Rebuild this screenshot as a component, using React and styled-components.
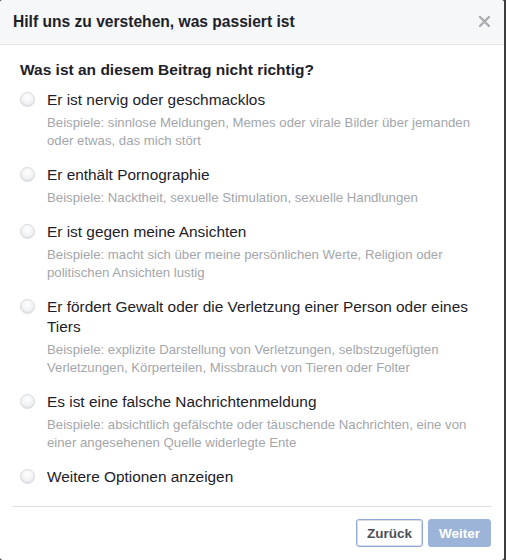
import React from 'react';
import styled, { createGlobalStyle } from 'styled-components';

const GlobalStyle = createGlobalStyle`
  html, body {
    margin: 0;
    padding: 0;
    background: #3d3d3d;
  }
  * {
    box-sizing: border-box;
  }
`;

const Dialog = styled.div`
  width: 504px;
  height: 560px;
  background: #fff;
  border-radius: 3px;
  overflow: hidden;
  font-family: "Liberation Sans", Arial, sans-serif;
  color: #1d2129;
  display: flex;
  flex-direction: column;
`;

const Header = styled.div`
  height: 45px;
  background: #f6f7f9;
  border-bottom: 1px solid #e5e5e5;
  display: flex;
  align-items: center;
  justify-content: space-between;
  padding: 0 12px 1px 13px;
`;

const HeaderTitle = styled.h1`
  margin: 0;
  font-size: 15.6px;
  font-weight: bold;
  line-height: 20px;
`;

const CloseButton = styled.button`
  width: 16px;
  height: 16px;
  padding: 0;
  border: 0;
  background: none;
  display: flex;
  align-items: center;
  justify-content: center;
  cursor: pointer;
`;

const Body = styled.div`
  padding: 15px 20px 0;
  flex: 1;
`;

const Question = styled.h2`
  margin: 0 0 10px;
  font-size: 15.5px;
  font-weight: bold;
  line-height: 20px;
`;

const OptionList = styled.div`
  display: flex;
  flex-direction: column;
  gap: 15px;
`;

const Option = styled.label`
  display: grid;
  grid-template-columns: 15px 1fr;
  column-gap: 12px;
  cursor: pointer;
`;

const Radio = styled.span`
  width: 15px;
  height: 15px;
  margin-top: 2px;
  border-radius: 50%;
  border: 1px solid #d8dade;
  background: radial-gradient(circle at 50% 35%, #ffffff 0%, #f1f2f4 55%, #e0e2e6 100%);
  box-shadow: inset 0 -1px 1px rgba(0, 0, 0, 0.05);
`;

const OptionText = styled.div`
  display: flex;
  flex-direction: column;
`;

const OptionTitle = styled.span`
  font-size: 15.4px;
  line-height: 20px;
  color: #1d2129;
`;

const OptionHint = styled.span`
  margin-top: 4px;
  font-size: 13.2px;
  line-height: 18px;
  color: #a3a6ab;
`;

const Divider = styled.hr`
  margin: 19px 12px 0;
  border: 0;
  border-top: 1px solid #dddfe2;
`;

const Footer = styled.div`
  display: flex;
  justify-content: flex-end;
  gap: 5px;
  padding: 12px 13px 13px;
`;

const Button = styled.button`
  height: 28px;
  padding: 0 ${(p) => (p.$primary ? '10px' : '10px')};
  border-radius: 3px;
  font-family: "Liberation Sans", Arial, sans-serif;
  font-size: 13.5px;
  font-weight: bold;
  cursor: pointer;
  color: ${(p) => (p.$primary ? '#fff' : '#4b4f56')};
  background: ${(p) => (p.$primary ? '#9cb4d8' : '#fff')};
  border: 1px solid ${(p) => (p.$primary ? '#9cb4d8' : '#8fa9dc')};
  box-shadow: ${(p) => (p.$primary ? 'none' : 'inset 0 0 0 1px #d7dce5')};
`;

const options = [
  {
    title: 'Er ist nervig oder geschmacklos',
    hint: 'Beispiele: sinnlose Meldungen, Memes oder virale Bilder über jemanden oder etwas, das mich stört',
  },
  {
    title: 'Er enthält Pornographie',
    hint: 'Beispiele: Nacktheit, sexuelle Stimulation, sexuelle Handlungen',
  },
  {
    title: 'Er ist gegen meine Ansichten',
    hint: 'Beispiele: macht sich über meine persönlichen Werte, Religion oder politischen Ansichten lustig',
  },
  {
    title: 'Er fördert Gewalt oder die Verletzung einer Person oder eines Tiers',
    hint: 'Beispiele: explizite Darstellung von Verletzungen, selbstzugefügten Verletzungen, Körperteilen, Missbrauch von Tieren oder Folter',
  },
  {
    title: 'Es ist eine falsche Nachrichtenmeldung',
    hint: 'Beispiele: absichtlich gefälschte oder täuschende Nachrichten, eine von einer angesehenen Quelle widerlegte Ente',
  },
  {
    title: 'Weitere Optionen anzeigen',
  },
];

const App = () => {
  return (
    <>
      <GlobalStyle />
      <Dialog>
        <Header>
          <HeaderTitle>Hilf uns zu verstehen, was passiert ist</HeaderTitle>
          <CloseButton aria-label="Schließen">
            <svg width="11" height="11" viewBox="0 0 11 11">
              <path d="M1 1L10 10M10 1L1 10" stroke="#a9acb1" strokeWidth="2.4" strokeLinecap="round" />
            </svg>
          </CloseButton>
        </Header>
        <Body>
          <Question>Was ist an diesem Beitrag nicht richtig?</Question>
          <OptionList>
            {options.map((o) => (
              <Option key={o.title}>
                <Radio />
                <OptionText>
                  <OptionTitle>{o.title}</OptionTitle>
                  {o.hint && <OptionHint>{o.hint}</OptionHint>}
                </OptionText>
              </Option>
            ))}
          </OptionList>
        </Body>
        <Divider />
        <Footer>
          <Button>Zurück</Button>
          <Button $primary disabled>Weiter</Button>
        </Footer>
      </Dialog>
    </>
  );
};

export default App;
